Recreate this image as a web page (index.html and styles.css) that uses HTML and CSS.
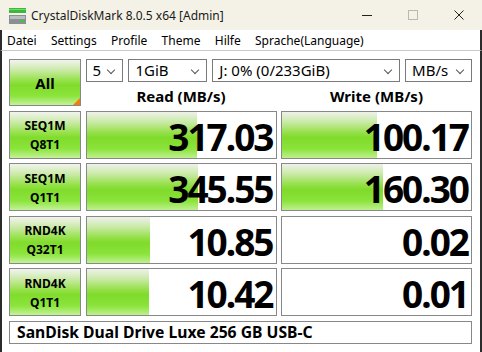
FILE: index.html
```html
<!DOCTYPE html>
<html lang="de">
<head>
  <meta charset="UTF-8" />
  <title>CrystalDiskMark 8.0.5 x64 [Admin]</title>
  <link rel="stylesheet" href="styles.css">
</head>
<body>
  <div class="window">
    <div class="titlebar">
      <svg class="app-icon" width="17" height="16" viewBox="0 0 17 16">
        <rect x="0" y="0" width="17" height="5" fill="#3cb83c"/>
        <rect x="0" y="1" width="17" height="1" fill="#7ad86a"/>
        <rect x="0" y="7" width="17" height="9" fill="#8a8f94"/>
        <rect x="1" y="8" width="15" height="3" fill="#b9bdc1"/>
        <rect x="11" y="12" width="4" height="2" fill="#3cc83c"/>
      </svg>
      <span class="title">CrystalDiskMark 8.0.5 x64 [Admin]</span>
      <div class="controls">
        <span class="ctl">
          <svg width="10" height="10" viewBox="0 0 10 10"><path d="M0 5.5h10" stroke="#222" stroke-width="1"/></svg>
        </span>
        <span class="ctl">
          <svg width="10" height="10" viewBox="0 0 10 10"><rect x="0.5" y="0.5" width="9" height="9" fill="none" stroke="#b8b8b8" stroke-width="1"/></svg>
        </span>
        <span class="ctl">
          <svg width="10" height="10" viewBox="0 0 10 10"><path d="M0.5 0.5l9 9M9.5 0.5l-9 9" stroke="#222" stroke-width="1"/></svg>
        </span>
      </div>
    </div>

    <div class="menubar">
      <span>Datei</span>
      <span>Settings</span>
      <span>Profile</span>
      <span>Theme</span>
      <span>Hilfe</span>
      <span>Sprache(Language)</span>
    </div>

    <div class="main">
      <div class="grid">
        <div class="btn all">All<span class="corner"></span></div>
        <div class="top">
          <div class="combos">
            <div class="combo w-count">5</div>
            <div class="combo w-size">1GiB</div>
            <div class="combo w-drive">J: 0% (0/233GiB)</div>
            <div class="combo w-unit">MB/s</div>
          </div>
          <div class="heads">
            <div class="head">Read (MB/s)</div>
            <div class="head">Write (MB/s)</div>
          </div>
        </div>

        <div class="btn label">SEQ1M<br>Q8T1</div>
        <div class="value"><div class="bar" style="width: 110px"></div><span>317.03</span></div>
        <div class="value"><div class="bar" style="width: 95px"></div><span>100.17</span></div>

        <div class="btn label">SEQ1M<br>Q1T1</div>
        <div class="value"><div class="bar" style="width: 111px"></div><span>345.55</span></div>
        <div class="value"><div class="bar" style="width: 101px"></div><span>160.30</span></div>

        <div class="btn label">RND4K<br>Q32T1</div>
        <div class="value"><div class="bar" style="width: 63px"></div><span>10.85</span></div>
        <div class="value"><span>0.02</span></div>

        <div class="btn label">RND4K<br>Q1T1</div>
        <div class="value"><div class="bar" style="width: 62px"></div><span>10.42</span></div>
        <div class="value"><span>0.01</span></div>

        <div class="footer">SanDisk Dual Drive Luxe 256 GB USB-C</div>
      </div>
    </div>
  </div>
</body>
</html>
```

FILE: styles.css
```css
body {
  margin: 0;
  font-family: "Noto Sans", "Open Sans", sans-serif;
  background: #ffffff;
  color: #000;
}

.window {
  width: 482px;
  height: 352px;
  overflow: hidden;
}

.titlebar {
  height: 30px;
  background: #f4f2e7;
  display: flex;
  align-items: center;
}

.app-icon {
  margin-left: 9px;
  margin-top: 1px;
}

.title {
  margin-left: 5px;
  font-size: 12px;
  color: #1a1a1a;
}

.controls {
  margin-left: auto;
  display: flex;
}

.ctl {
  width: 46px;
  height: 30px;
  display: flex;
  align-items: center;
  justify-content: center;
}

.menubar {
  height: 20px;
  border-left: 2px solid #2b2b2b;
  border-right: 2px solid #2b2b2b;
  border-bottom: 1px solid #c9c9c9;
  display: flex;
  align-items: center;
  padding-left: 5px;
  font-size: 12px;
}

.menubar span {
  margin-right: 14.3px;
}

.main {
  height: 299px;
  border-left: 2px solid #2b2b2b;
  border-right: 2px solid #2b2b2b;
  border-bottom: 2px solid #2b2b2b;
  padding: 8px 0 0 7px;
}

.grid {
  display: grid;
  grid-template-columns: 72px 191px 191px;
  grid-template-rows: 47px repeat(4, 48px) 23px;
  column-gap: 4.5px;
  row-gap: 4.5px;
}

.btn {
  border: 1px solid #888;
  box-sizing: border-box;
  background: linear-gradient(to bottom, #f2f4ee 0%, #cbeaa8 22%, #98e24e 44%, #80dc2c 56%, #8ce43c 80%, #c4f29a 100%);
  display: flex;
  align-items: center;
  justify-content: center;
  text-align: center;
  font-weight: bold;
}

.all {
  position: relative;
  font-size: 15px;
}

.corner {
  position: absolute;
  right: 0;
  bottom: 0;
  width: 0;
  height: 0;
  border-left: 7px solid transparent;
  border-bottom: 7px solid #f57c0a;
}

.label {
  font-size: 12px;
  line-height: 19px;
  padding-top: 1px;
}

.top {
  grid-column: 2 / 4;
  display: flex;
  flex-direction: column;
}

.combos {
  display: flex;
  gap: 5px;
}

.combo {
  height: 23px;
  box-sizing: border-box;
  border: 1px solid #7a7a7a;
  background: #fff;
  font-size: 15px;
  line-height: 21px;
  padding-left: 6px;
  position: relative;
}

.combo::after {
  content: "";
  position: absolute;
  right: 8px;
  top: 7px;
  width: 5px;
  height: 5px;
  border-right: 1px solid #555;
  border-bottom: 1px solid #555;
  transform: rotate(45deg);
}

.w-count { width: 38px; }
.w-size { width: 79px; }
.w-drive { width: 188px; }
.w-unit { width: 67px; }

.heads {
  display: flex;
  gap: 4.5px;
  margin-top: 5px;
}

.head {
  width: 191px;
  text-align: center;
  font-size: 15px;
  font-weight: bold;
  line-height: 19px;
}

.value {
  border: 1px solid #888;
  box-sizing: border-box;
  background: #fff;
  position: relative;
  display: flex;
  align-items: center;
  justify-content: flex-end;
  padding-right: 6px;
}

.bar {
  position: absolute;
  left: 0;
  top: 0;
  bottom: 0;
  background: linear-gradient(to bottom, #eef1ea 0%, #c9eaa6 22%, #96e04c 44%, #7fdb2b 56%, #8be33b 80%, #bff090 100%);
}

.value span {
  position: relative;
  font-size: 37px;
  font-weight: bold;
  letter-spacing: -2px;
  line-height: 1;
  margin-top: 3px;
  margin-right: -3px;
}

.footer {
  grid-column: 1 / 4;
  border: 1px solid #888;
  box-sizing: border-box;
  font-size: 15.7px;
  font-weight: bold;
  line-height: 21px;
  padding-left: 7px;
}
```
